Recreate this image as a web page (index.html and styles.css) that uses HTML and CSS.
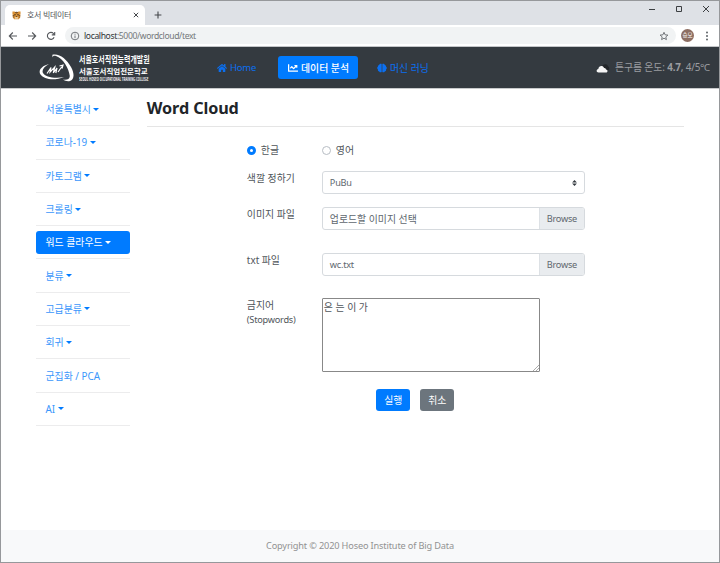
FILE: index.html
```html
<!DOCTYPE html>
<html lang="ko">
<head>
<meta charset="utf-8">
<title>호서 빅데이터</title>
<link rel="stylesheet" href="styles.css">
</head>
<body>
<div class="window">
  <div class="tabstrip">
    <div class="tab">
      <svg class="favicon" viewBox="0 0 10 10"><path fill="#d99235" d="M.5.5h2.2l.8.7h3l.8-.7h2.2v3l-.4.7.2 2.6-1.6 2.4H2.3L.7 6.8l.2-2.6-.4-.7z"/><path stroke="#5c3b1c" stroke-width=".8" d="M5 .8v2M3.8 1v1.4M6.2 1v1.4M.8 5h1.8M7.4 5h1.8M1 6.7h1.5M7.5 6.7H9"/><path fill="#463422" d="M2.5 3.6h1.7v1.1H2.5zM5.8 3.6h1.7v1.1H5.8zM4.3 5.7h1.4v.9H4.3z"/><path fill="#eee1c8" d="M3.2 7h3.6v1.4H3.2z"/></svg>
      <span class="tab-title">호서 빅데이터</span>
      <svg class="tab-close" viewBox="0 0 6 6"><path d="M.8.8l4.4 4.4M5.2.8L.8 5.2"/></svg>
    </div>
    <svg class="tab-new" viewBox="0 0 8 8"><path d="M4 .6v6.8M.6 4h6.8"/></svg>
    <div class="controls">
      <svg viewBox="0 0 8 8"><path d="M1 4.5h6"/></svg>
      <svg viewBox="0 0 8 8"><path d="M1.5 1.5h5v5h-5z"/></svg>
      <svg viewBox="0 0 8 8"><path d="M1 1l6 6M7 1L1 7"/></svg>
    </div>
  </div>
  <div class="toolbar">
    <svg class="tool" viewBox="0 0 10 10"><path d="M9 5H1.5M4.8 1.5L1.3 5l3.5 3.5"/></svg>
    <svg class="tool" viewBox="0 0 10 10"><path d="M1 5h7.5M5.2 1.5L8.7 5 5.2 8.5"/></svg>
    <svg class="tool" viewBox="0 0 10 10"><path d="M8.1 6.3A3.5 3.5 0 1 1 7.5 2.5L8.5 3.7M8.7 1v2.9H5.8"/></svg>
    <div class="address">
      <svg class="info" viewBox="0 0 10 10"><circle cx="5" cy="5" r="3.8"/><path d="M5 4.5v2.7M5 2.7v1"/></svg>
      <span class="url"><b>localhost</b>:5000/wordcloud/text</span>
      <svg class="star" viewBox="0 0 10 10"><path d="M5 1.3l1.1 2.5 2.8.3-2.1 1.8.6 2.7L5 7.2 2.6 8.6l.6-2.7-2.1-1.8 2.8-.3z"/></svg>
    </div>
    <span class="avatar">승모</span>
    <svg class="more" viewBox="0 0 4 12"><circle cx="2" cy="2.4" r="1"/><circle cx="2" cy="6" r="1"/><circle cx="2" cy="9.6" r="1"/></svg>
  </div>
  <header class="navbar">
    <a class="brand">
      <svg class="emblem" viewBox="0 0 36 28"><path fill="#fff" d="M13.4.8C20-1 27.5 5 32 13c4 7 3 13-1 14-2.500.6-5-.1-7-1.500 4 .7 7.200-.5 6.700-4C30 15 24 4 17 2c-2-.6-3.200 0-3.600 1.500z"/><path fill="#fff" d="M10 10C2 12-1 17 1.500 20.500c3.500 5 14 6.500 23.500 2.500C16 25 6 23 4 19c-1.500-3 1-6 6-9z"/><path fill="none" stroke="#fff" stroke-width="1.200" d="M8 19.500l4-6-.9 4.500 4.700-5-1.500 6 3.700-5-1.200 5M19 18l4-5.500M20.500 12l3.500-1-1 3.500"/></svg>
      <span class="brand-text">
        <span class="brand-top">서울호서직업능력개발원</span>
        <span class="brand-mid">서울호서직업전문학교</span>
        <span class="brand-low">SEOUL HOSEO OCCUPATIONAL TRAINING COLLEGE</span>
      </span>
    </a>
    <nav class="menu">
      <a class="menu-link home"><svg viewBox="0 0 576 512"><path d="M280 148L96 300v164a16 16 0 0 0 16 16h112a16 16 0 0 0 16-16v-96a16 16 0 0 1 16-16h64a16 16 0 0 1 16 16v96a16 16 0 0 0 16 16h112a16 16 0 0 0 16-16V300L296 148a12 12 0 0 0-16 0zM572 251l-84-69V44a12 12 0 0 0-12-12h-56a12 12 0 0 0-12 12v72l-90-74a48 48 0 0 0-61 0L4 251a12 12 0 0 0-2 17l26 31a12 12 0 0 0 17 2L280 107a12 12 0 0 1 16 0l235 194a12 12 0 0 0 17-2l26-31a12 12 0 0 0-2-17z"/></svg><span class="latin">Home</span></a>
      <a class="menu-link analysis"><svg viewBox="0 0 512 512"><path d="M496 384H64V80c0-9-7-16-16-16H16C7 64 0 71 0 80v336c0 18 14 32 32 32h464c9 0 16-7 16-16v-32c0-9-7-16-16-16zM464 96H346c-22 0-32 26-17 41l32 32-73 73-73-73a32 32 0 0 0-46 0l-68 69a16 16 0 0 0 0 22l23 23c6 6 16 6 22 0l46-46 73 74a32 32 0 0 0 46 0l96-97 32 33c15 15 41 4 41-17V112c0-9-7-16-16-16z"/></svg><span>데이터 분석</span></a>
      <a class="menu-link learning"><svg viewBox="0 0 12 12"><path d="M5.6 1.3v9.400c-.9.9-2.500.6-2.900-.5C1.400 10 .8 8.800 1.200 7.900-.1 7-.1 5.200 1.100 4.500.9 3.300 1.600 2.400 2.600 2.300 2.900.9 4.800.3 5.600 1.300zM6.400 1.300v9.400c.9.9 2.500.6 2.900-.5 1.300-.2 1.900-1.400 1.500-2.300 1.300-.9 1.300-2.700.1-3.400.2-1.200-.5-2.100-1.500-2.200C9.100.9 7.200.3 6.400 1.300z"/></svg><span>머신 러닝</span></a>
    </nav>
    <div class="weather">
      <svg viewBox="0 0 14 12"><path fill="#222529" d="M6 5c0-3 5-4 6-.8 2 1 1.500 4-.5 4.300z"/><path fill="#f5f5f5" d="M2.600 10.500C0 10.500.1 7.200 2.300 7 2.600 3.600 7 3 8 6c1.300-.2 1.900.6 2 1.500 2 .1 2 3 0 3z"/></svg>
      <span>튼구름 온도: <b>4.7</b>, 4/5℃</span>
    </div>
  </header>
  <div class="page">
    <ul class="sidebar">
      <li><a>서울특별시<i class="caret"></i></a></li>
      <li><a>코로나-19<i class="caret"></i></a></li>
      <li><a>카토그램<i class="caret"></i></a></li>
      <li><a>크롤링<i class="caret"></i></a></li>
      <li><a class="active">워드 클라우드<i class="caret"></i></a></li>
      <li><a>분류<i class="caret"></i></a></li>
      <li><a>고급분류<i class="caret"></i></a></li>
      <li><a>회귀<i class="caret"></i></a></li>
      <li><a>군집화 / PCA</a></li>
      <li><a>AI<i class="caret"></i></a></li>
    </ul>
    <main class="content">
      <h1>Word Cloud</h1>
      <form class="form">
        <div class="row row-lang">
          <label class="choice"><span class="radio checked"></span>한글</label>
          <label class="choice"><span class="radio"></span>영어</label>
        </div>
        <div class="row row-color">
          <label>색깔 정하기</label>
          <div class="control"><span class="latin">PuBu</span><svg class="sort" viewBox="0 0 4 5"><path d="M2 0L0 2h4zM2 5L0 3h4z"/></svg></div>
        </div>
        <div class="row row-image">
          <label>이미지 파일</label>
          <div class="control"><span>업로드할 이미지 선택</span><span class="browse latin">Browse</span></div>
        </div>
        <div class="row row-txt">
          <label>txt 파일</label>
          <div class="control"><span class="latin">wc.txt</span><span class="browse latin">Browse</span></div>
        </div>
        <div class="row row-stop">
          <label>금지어<br><span class="latin">(Stopwords)</span></label>
          <div class="area">은 는 이 가<svg class="grip" viewBox="0 0 6 6"><path d="M0 6L6 0M3 6l3-3"/></svg></div>
        </div>
        <div class="actions"><a class="btn run">실행</a><a class="btn cancel">취소</a></div>
      </form>
    </main>
  </div>
  <footer class="footer"><span>Copyright © 2020 Hoseo Institute of Big Data</span></footer>
</div>
</body>
</html>
```
FILE: styles.css
```css
* { box-sizing: border-box; }
body {
  margin: 0;
  font-family: "Noto Sans", "Noto Sans CJK KR", sans-serif;
  font-size: 9.9px;
  line-height: 14px;
  color: #50565b;
}
svg { display: block; flex: none; }
.latin { font-size: 9.2px; letter-spacing: -.25px; }
.window {
  width: 720px;
  height: 563px;
  display: flex;
  flex-direction: column;
  border: 1px solid #96989b;
  background: #fff;
  overflow: hidden;
}
.tabstrip { height: 24px; background: #dee1e6; display: flex; align-items: center; flex: none; }
.tab {
  width: 140px;
  height: 20px;
  margin: 4px 0 0 4px;
  padding: 0 6px 0 7px;
  background: #fff;
  border-radius: 5px 5px 0 0;
  display: flex;
  align-items: center;
}
.favicon { width: 9px; height: 9px; }
.tab-title { margin-left: 6px; font-size: 8px; letter-spacing: -.3px; color: #55585b; flex: 1; }
.tab-close { width: 6px; height: 6px; fill: none; stroke: #44474a; stroke-width: 1; }
.tab-new { width: 8px; height: 8px; margin: 4px 0 0 9px; fill: none; stroke: #44474a; stroke-width: 1.1; }
.controls { margin: -9px 9px 0 auto; display: flex; gap: 19px; }
.controls svg { width: 8px; height: 8px; fill: none; stroke: #3c3f42; stroke-width: 1; }
.toolbar {
  height: 22px;
  flex: none;
  display: flex;
  align-items: center;
  padding: 0 10px 0 7px;
  border-bottom: 1px solid #c3c5c8;
}
.tool { width: 10px; height: 10px; margin-right: 9px; fill: none; stroke: #55585c; stroke-width: 1.1; }
.address {
  flex: 1;
  height: 17px;
  border-radius: 9px;
  background: #f1f3f4;
  display: flex;
  align-items: center;
  padding: 0 7px 0 5px;
}
.address svg { width: 10px; height: 10px; fill: none; stroke: #65696d; stroke-width: .9; }
.url { margin-left: 4px; flex: 1; font-size: 8.6px; letter-spacing: -.38px; color: #73777a; }
.url b { font-weight: 400; color: #303336; }
.avatar {
  width: 13px;
  height: 13px;
  margin-left: 5px;
  border-radius: 50%;
  background: #8d6e63;
  color: #fff;
  font-size: 5.5px;
  line-height: 13px;
  text-align: center;
}
.more { width: 4px; height: 12px; margin-left: 11px; fill: #5f6368; }
.navbar {
  height: 42px;
  flex: none;
  background: #343a40;
  border-bottom: 1px solid #c8cacc;
  display: flex;
  align-items: center;
  padding: 0 9px 0 38px;
}
.brand { width: 178px; display: flex; align-items: center; gap: 4px; color: #fff; }
.emblem { width: 36px; height: 28px; }
.brand-text { display: flex; flex-direction: column; white-space: nowrap; font-weight: 700; width: 72px; }
.brand-text span { transform-origin: 0 50%; width: max-content; font-family: "Noto Sans CJK KR", sans-serif; }
.brand-top { font-size: 9.4px; line-height: 11px; transform: scaleX(.745); }
.brand-mid { font-size: 7.4px; line-height: 11px; transform: scaleX(1.01); }
.brand-low { font-size: 4.5px; line-height: 6px; transform: scaleX(.62); }
.menu { display: flex; }
.menu-link { height: 23px; display: flex; align-items: center; color: #0b6ff0; gap: 3px; white-space: nowrap; }
.menu-link svg { width: 10px; height: 10px; fill: currentColor; }
.menu-link .latin { font-size: 9.5px; }
.home { width: 61px; }
.analysis { width: 80px; padding-left: 10px; background: #007bff; color: #fff; border-radius: 3px; font-weight: 500; }
.learning { margin-left: 19px; }
.weather { margin-left: auto; display: flex; align-items: center; gap: 5px; color: #9b9da0; white-space: nowrap; letter-spacing: -.14px; }
.weather span { position: relative; top: -1px; }
.weather svg { width: 14px; height: 12px; }
.page { height: 440.5px; flex: none; display: flex; padding: 4px 35px 0 35px; }
.sidebar { list-style: none; margin: 0; padding: 0; width: 94px; }
.sidebar li { height: 33.3px; padding-top: 5px; border-bottom: 1px solid #ececed; }
.sidebar a {
  height: 23.3px;
  padding: 0 0 1px 9.5px;
  display: flex;
  align-items: center;
  color: #3b97fb;
  border-radius: 3px;
}
.sidebar a.active { background: #007bff; color: #fff; }
.caret { margin-left: 2.5px; border: 3px solid transparent; border-top-color: #007bff; border-bottom: 0; }
.active .caret { border-top-color: #fff; }
.content { width: 538px; margin: -1px 0 0 17px; }
h1 {
  margin: 0;
  height: 35px;
  padding-top: 5px;
  font-size: 16.2px;
  line-height: 22px;
  letter-spacing: -.1px;
  font-weight: 700;
  color: #212529;
  border-bottom: 1px solid #e5e5e5;
}
.form { width: 338px; margin: 16px 0 0 100px; }
.row { display: grid; grid-template-columns: 75px 263px; align-items: start; }
.row-lang { height: 28px; }
.row-color { height: 36px; }
.row-image { height: 46px; }
.row-txt { height: 45px; }
.row-stop { height: 91px; }
.row-lang label { display: flex; align-items: center; gap: 5px; }
.radio { width: 9px; height: 9px; border: 1px solid #b7bdc4; border-radius: 50%; }
.radio.checked { border: 3px solid #007bff; }
.control {
  height: 23px;
  border: 1px solid #d6dade;
  border-radius: 3px;
  display: flex;
  align-items: center;
  justify-content: space-between;
  padding-left: 7px;
  overflow: hidden;
  color: #60676e;
}
.sort { width: 5px; height: 6px; margin-right: 7px; fill: #343a40; }
.browse { width: 45px; height: 21px; line-height: 21px; background: #e9ecef; text-align: center; border-left: 1px solid #dde1e5; }
.area {
  position: relative;
  width: 218px;
  height: 74px;
  padding: 1px;
  border: 1px solid #888;
  border-radius: 1px;
}
.grip { position: absolute; right: 0; bottom: 0; width: 6px; height: 6px; fill: none; stroke: #888; stroke-width: .7; }
.actions { display: flex; gap: 10px; padding-left: 129.5px; }
.btn { width: 34px; height: 22px; line-height: 22px; border-radius: 3px; color: #fff; text-align: center; }
.run { background: #007bff; }
.cancel { background: #6c757d; }
.footer { flex: 1; background: #f8f9fa; color: #929292; display: flex; align-items: center; justify-content: center; font-size: 9.2px; letter-spacing: -.15px; }
```
